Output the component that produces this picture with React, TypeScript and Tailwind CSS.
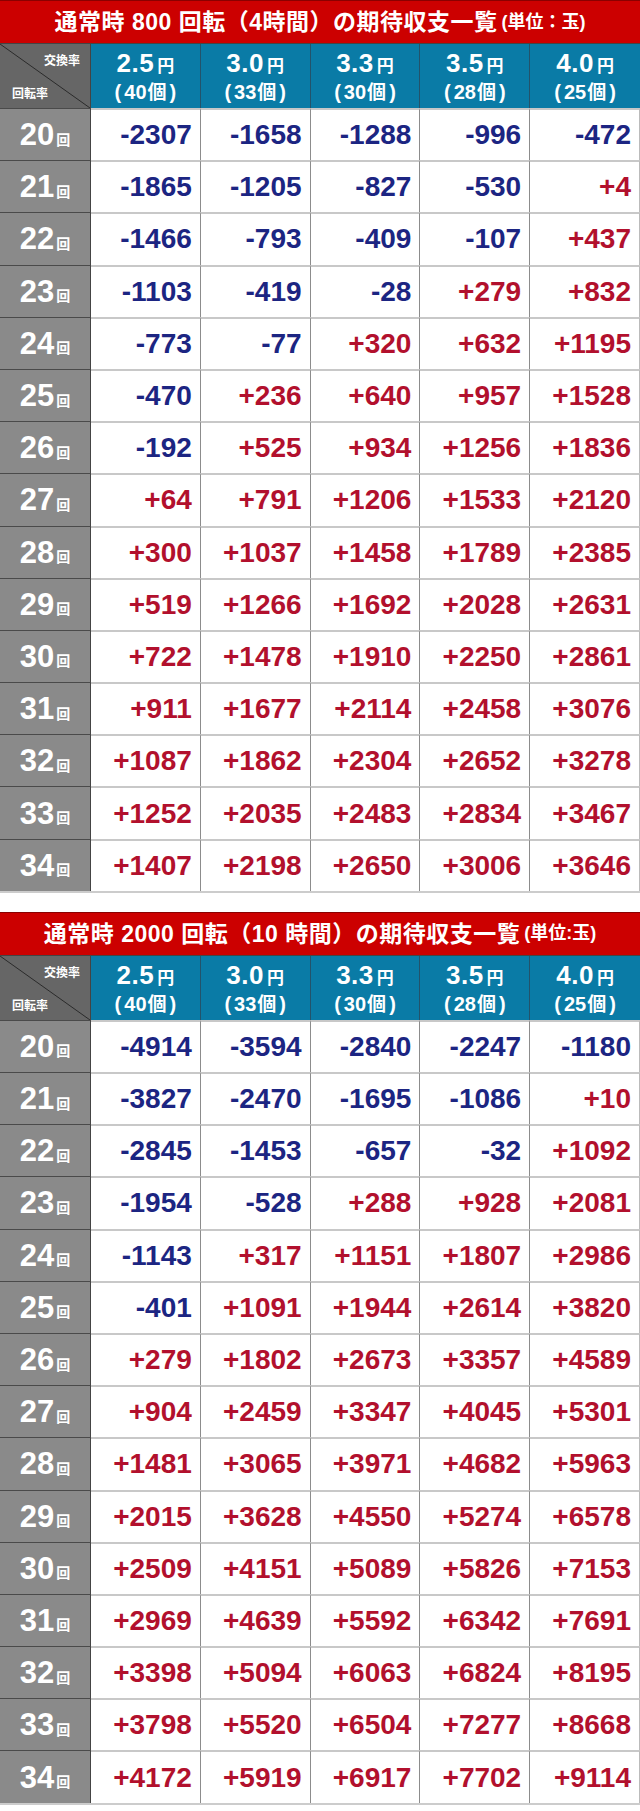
const rates = [
  { yen: '2.5', count: '40' },
  { yen: '3.0', count: '33' },
  { yen: '3.3', count: '30' },
  { yen: '3.5', count: '28' },
  { yen: '4.0', count: '25' },
];

const table800 = [
  [-2307, -1658, -1288, -996, -472],
  [-1865, -1205, -827, -530, 4],
  [-1466, -793, -409, -107, 437],
  [-1103, -419, -28, 279, 832],
  [-773, -77, 320, 632, 1195],
  [-470, 236, 640, 957, 1528],
  [-192, 525, 934, 1256, 1836],
  [64, 791, 1206, 1533, 2120],
  [300, 1037, 1458, 1789, 2385],
  [519, 1266, 1692, 2028, 2631],
  [722, 1478, 1910, 2250, 2861],
  [911, 1677, 2114, 2458, 3076],
  [1087, 1862, 2304, 2652, 3278],
  [1252, 2035, 2483, 2834, 3467],
  [1407, 2198, 2650, 3006, 3646],
];

const table2000 = [
  [-4914, -3594, -2840, -2247, -1180],
  [-3827, -2470, -1695, -1086, 10],
  [-2845, -1453, -657, -32, 1092],
  [-1954, -528, 288, 928, 2081],
  [-1143, 317, 1151, 1807, 2986],
  [-401, 1091, 1944, 2614, 3820],
  [279, 1802, 2673, 3357, 4589],
  [904, 2459, 3347, 4045, 5301],
  [1481, 3065, 3971, 4682, 5963],
  [2015, 3628, 4550, 5274, 6578],
  [2509, 4151, 5089, 5826, 7153],
  [2969, 4639, 5592, 6342, 7691],
  [3398, 5094, 6063, 6824, 8195],
  [3798, 5520, 6504, 7277, 8668],
  [4172, 5919, 6917, 7702, 9114],
];

const font = "font-['Liberation_Sans','Noto_Sans_CJK_JP',sans-serif]";

function Title({ main, unit }: { main: React.ReactNode; unit: string }) {
  return (
    <div className="h-[43px] bg-[#cc0000] border-t border-[#8a0000] flex items-center justify-center text-white font-bold whitespace-nowrap">
      <span className="text-[23px] tracking-[0.5px]">{main}</span>
      <span className="text-[18px] ml-1">{unit}</span>
    </div>
  );
}

function Table({ title, unit, data }: { title: React.ReactNode; unit: string; data: number[][] }) {
  return (
    <div className={`w-[640px] ${font}`}>
      <Title main={title} unit={unit} />
      <div className="grid grid-cols-[91px_repeat(5,1fr)] border-t border-[#444]">
        <div className="relative h-[64px] bg-[#666666] border-r border-[#444] text-white font-bold text-[12px] leading-none">
          <svg className="absolute inset-0 w-full h-full" viewBox="0 0 91 64" preserveAspectRatio="none">
            <line x1="0" y1="0" x2="91" y2="64" stroke="#2a2a2a" strokeWidth="1" />
          </svg>
          <span className="absolute right-[10px] top-[11px]">交換率</span>
          <span className="absolute left-[12px] bottom-[8px]">回転率</span>
        </div>
        {rates.map((r, i) => (
          <div
            key={r.yen}
            className={`h-[64px] bg-[#0a7ba6] flex flex-col items-center justify-center text-white font-bold leading-none ${i < 4 ? 'border-r border-[#23536b]' : ''}`}
          >
            <div className="flex items-baseline">
              <span className="text-[26px] tracking-[0.5px]">{r.yen}</span>
              <span className="text-[17px] ml-[3px]">円</span>
            </div>
            <div className="flex items-baseline text-[20px] mt-[6px]">
              <span className="mr-[3px]">(</span>
              <span>{r.count}</span>
              <span className="text-[19px] ml-[1px]">個</span>
              <span className="ml-[3px]">)</span>
            </div>
          </div>
        ))}
        {data.map((row, ri) => (
          <Row key={ri} turn={20 + ri} values={row} />
        ))}
      </div>
    </div>
  );
}

function Row({ turn, values }: { turn: number; values: number[] }) {
  return (
    <>
      <div className="h-[52.2px] bg-[#8a8a8a] border-t border-[#4a4a4a] border-r border-r-[#444] flex items-center justify-center text-white font-bold">
        <span className="text-[31px] leading-none">{turn}</span>
        <span className="text-[14px] leading-none ml-[2px] mt-[10px]">回</span>
      </div>
      {values.map((v, i) => (
        <div
          key={i}
          className={`h-[52.2px] bg-white border-t-2 border-[#c8c8c8] flex items-center justify-end pr-[8px] text-[28px] font-bold leading-none ${i < 4 ? 'border-r border-r-[#8c8c8c]' : 'border-r border-r-[#bbbbbb]'} ${v < 0 ? 'text-[#1c2582]' : 'text-[#b2102d]'}`}
        >
          {v > 0 ? `+${v}` : `-${Math.abs(v)}`}
        </div>
      ))}
    </>
  );
}

export default function App() {
  return (
    <div className="w-[640px] h-[1811px] bg-white">
      <Table
        title={<>通常時 800 回転（4時間）の期待収支一覧</>}
        unit="(単位：玉)"
        data={table800}
      />
      <div className="border-t-2 border-[#cccccc]" />
      <div className="mt-[19px]">
        <Table
          title={<>通常時 2000 回転（10 時間）の期待収支一覧</>}
          unit="(単位:玉)"
          data={table2000}
        />
      </div>
      <div className="border-t-2 border-[#cccccc]" />
    </div>
  );
}
